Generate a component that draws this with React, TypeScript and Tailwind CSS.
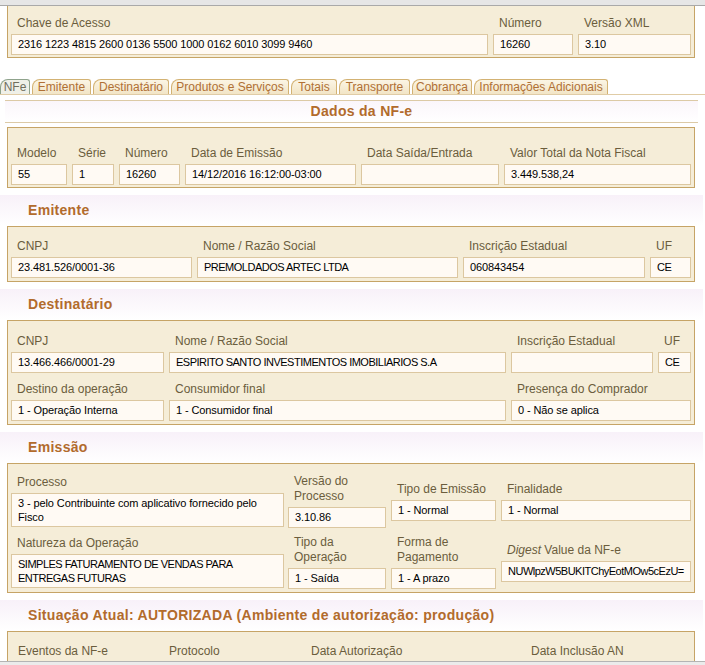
import type { ReactNode } from "react";

const TABS = [
  { name: "NFe", w: "w-[30px]", active: true },
  { name: "Emitente", w: "w-[59px]" },
  { name: "Destinatário", w: "w-[76px]" },
  { name: "Produtos e Serviços", w: "w-[118px]" },
  { name: "Totais", w: "w-[46px]" },
  { name: "Transporte", w: "w-[71px]" },
  { name: "Cobrança", w: "w-[60px]" },
  { name: "Informações Adicionais", w: "w-[134px]" },
];

function Field({
  label,
  value = "",
  className = "",
  tall = false,
  caps = false,
}: {
  label: ReactNode;
  value?: string;
  className?: string;
  tall?: boolean;
  caps?: boolean;
}) {
  // upper-case values render narrower in the original
  const track = caps ? "tracking-[-0.5px]" : "tracking-[-0.1px]";
  return (
    <div className={`flex flex-col ${className}`}>
      <span className="mb-[3px] pl-[6px] text-[12px] leading-[15px] text-[#6b5d3d]">
        {label}
      </span>
      <div
        className={
          tall
            ? `h-[34px] overflow-hidden border border-[#dcc7a0] bg-[#fffaf4] px-[6px] py-[2px] text-[11px] leading-[14px] text-black ${track}`
            : `h-[21px] overflow-hidden whitespace-nowrap border border-[#dcc7a0] bg-[#fffaf4] px-[6px] text-[11px] leading-[19px] text-black ${track}`
        }
      >
        {value}
      </div>
    </div>
  );
}

function Box({ className = "", children }: { className?: string; children: ReactNode }) {
  return (
    <div className={`ml-[7px] w-[688px] border border-[#c6a466] bg-[#f5edd8] px-[3px] ${className}`}>
      {children}
    </div>
  );
}

function Section({ children }: { children: ReactNode }) {
  return (
    <div className="mt-[7px] h-[31px] w-[703px] bg-linear-to-b from-[#f8f1f9] to-white pl-[28px] pt-[5px] text-[14px] font-bold leading-[20px] tracking-[0.3px] text-[#b26b2c]">
      {children}
    </div>
  );
}

export default function App() {
  return (
    <div className="flex h-[665px] w-[705px] flex-col overflow-hidden bg-white font-['Liberation_Sans',Arial,sans-serif]">
      <div className="flex-1 overflow-hidden">
        <div className="h-[6px] border-b border-[#a9a9a9] bg-[#e6e6e6]" />

        {/* chave de acesso */}
        <div className="ml-[7px] flex w-[688px] gap-[5px] border-x border-b border-[#c6a466] bg-[#f5edd8] px-[3px] pb-[2px] pt-[10px]">
          <Field
            className="w-[477px]"
            label="Chave de Acesso"
            value="2316 1223 4815 2600 0136 5500 1000 0162 6010 3099 9460"
          />
          <Field className="w-[80px]" label="Número" value="16260" />
          <Field className="w-[113px]" label="Versão XML" value="3.10" />
        </div>

        {/* tabs */}
        <div className="mt-[21px] flex h-[16px] items-end gap-[2px] border-b border-[#e0cca6]">
          {TABS.map((t) => (
            <span
              key={t.name}
              className={`flex h-[15px] shrink-0 items-center justify-center whitespace-nowrap rounded-tl-[8px] rounded-tr-[3px] border border-b-0 text-[12px] leading-none ${t.w} ${
                t.active
                  ? "border-[#8fa38c] bg-[#eff0e8] text-[#6f6f5e]"
                  : "border-[#d3b273] bg-linear-to-b from-[#fbf5e5] to-[#f2e5c6] text-[#b07035]"
              }`}
            >
              {t.name}
            </span>
          ))}
        </div>

        <div className="ml-[5px] mt-[5px] flex h-[23px] w-[693px] items-center justify-center border-y border-[#dccaa6] bg-linear-to-b from-[#fbf6fb] to-white pl-[20px] text-[14px] font-bold tracking-[0.3px] text-[#b26b2c]">
          Dados da NF-e
        </div>

        <Box className="mt-[4px] flex gap-[5px] pb-[2px] pt-[18px]">
          <Field className="w-[56px]" label="Modelo" value="55" />
          <Field className="w-[42px]" label="Série" value="1" />
          <Field className="w-[61px]" label="Número" value="16260" />
          <Field className="w-[171px]" label="Data de Emissão" value="14/12/2016 16:12:00-03:00" />
          <Field className="w-[138px]" label="Data Saída/Entrada" />
          <Field className="w-[187px]" label="Valor Total da Nota Fiscal" value="3.449.538,24" />
        </Box>

        <Section>Emitente</Section>
        <Box className="flex gap-[5px] pb-[3px] pt-[12px]">
          <Field className="w-[181px]" label="CNPJ" value="23.481.526/0001-36" />
          <Field caps className="w-[261px]" label="Nome / Razão Social" value="PREMOLDADOS ARTEC LTDA" />
          <Field className="w-[182px]" label="Inscrição Estadual" value="060843454" />
          <Field caps className="w-[41px]" label="UF" value="CE" />
        </Box>

        <Section>Destinatário</Section>
        <Box className="grid grid-cols-[153px_337px_142px_33px] gap-x-[5px] gap-y-[9px] pb-[3px] pt-[13px]">
          <Field label="CNPJ" value="13.466.466/0001-29" />
          <Field caps label="Nome / Razão Social" value="ESPIRITO SANTO INVESTIMENTOS IMOBILIARIOS S.A" />
          <Field label="Inscrição Estadual" />
          <Field caps label="UF" value="CE" />
          <Field label="Destino da operação" value="1 - Operação Interna" />
          <Field label="Consumidor final" value="1 - Consumidor final" />
          <Field className="col-span-2" label="Presença do Comprador" value="0 - Não se aplica" />
        </Box>

        <Section>Emissão</Section>
        <Box className="flex flex-col gap-[7px] pb-[3px] pt-[10px]">
          <div className="flex items-center">
            <Field
              tall
              className="w-[273px]"
              label="Processo"
              value="3 - pelo Contribuinte com aplicativo fornecido pelo Fisco"
            />
            <Field className="ml-[4px] w-[98px]" label="Versão do Processo" value="3.10.86" />
            <Field className="ml-[5px] w-[105px]" label="Tipo de Emissão" value="1 - Normal" />
            <Field className="ml-[5px] w-[190px]" label="Finalidade" value="1 - Normal" />
          </div>
          <div className="flex items-center">
            <Field
              tall
              caps
              className="w-[273px]"
              label="Natureza da Operação"
              value="SIMPLES FATURAMENTO DE VENDAS PARA ENTREGAS FUTURAS"
            />
            <Field className="ml-[4px] w-[98px]" label="Tipo da Operação" value="1 - Saída" />
            <Field className="ml-[5px] w-[105px]" label="Forma de Pagamento" value="1 - A prazo" />
            <Field
              caps
              className="ml-[5px] w-[190px]"
              label={
                <>
                  <i>Digest</i> Value da NF-e
                </>
              }
              value="NUWlpzW5BUKITChyEotMOw5cEzU="
            />
          </div>
        </Box>

        <Section>Situação Atual: AUTORIZADA (Ambiente de autorização: produção)</Section>
        <Box className="flex h-[60px] pt-[12px] text-[12px] leading-[15px] text-[#6b5d3d]">
          <span className="w-[151px] pl-[7px]">Eventos da NF-e</span>
          <span className="w-[142px] pl-[7px]">Protocolo</span>
          <span className="w-[220px] pl-[7px]">Data Autorização</span>
          <span className="pl-[7px]">Data Inclusão AN</span>
        </Box>
      </div>
      <div className="h-[4px] shrink-0 border-t border-[#b4b4b4] bg-[#ebebeb]" />
    </div>
  );
}
